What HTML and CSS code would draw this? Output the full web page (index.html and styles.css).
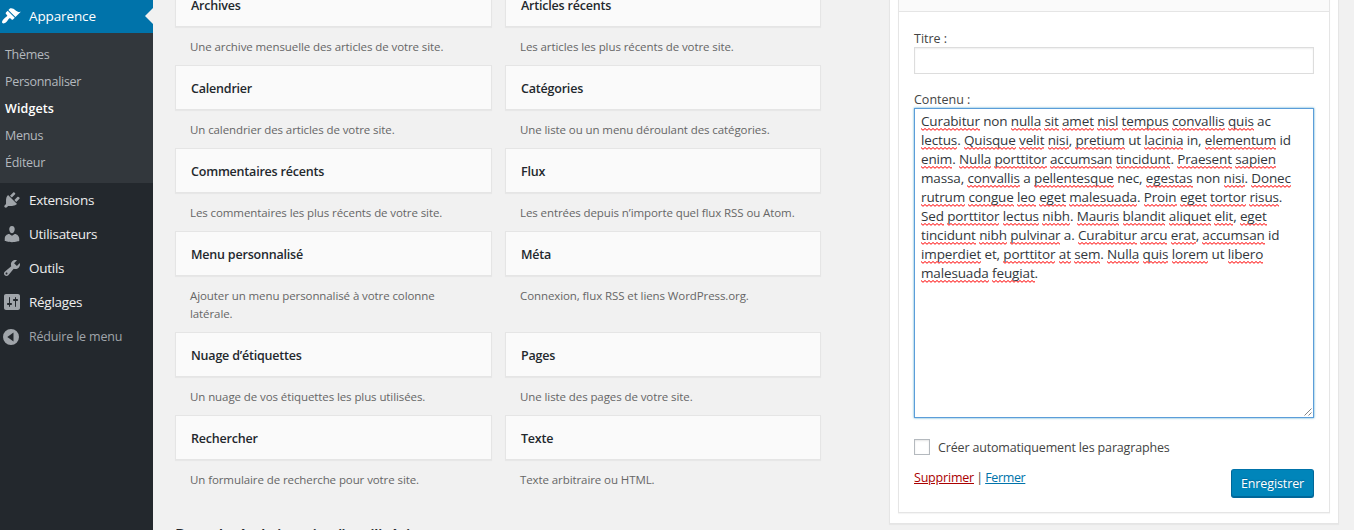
FILE: index.html
```html
<!DOCTYPE html>
<html lang="fr">
<head>
<meta charset="utf-8">
<title>Widgets</title>
<link rel="stylesheet" href="styles.css">
</head>
<body>
<div class="admin">
  <nav class="menu">
    <a class="item current"><svg class="icon" viewBox="0 0 20 20"><path d="M14.48 11.06L7.41 3.99l1.5-1.5c.5-.56 2.300-.47 3.510.32 1.210.8 1.430 1.280 2.910 2.100 1.180.64 2.450 1.260 4.450.85zm-.71.71L6.700 4.700 4.930 6.470c-.39.39-.39 1.020 0 1.410l1.060 1.060c.39.39.39 1.030 0 1.420-.6.6-1.430 1.110-2.210 1.690-.35.26-.7.53-1.010.84C1.430 14.230.4 16.080 1.400 17.070c.99 1 2.840-.03 4.180-1.360.31-.31.58-.66.85-1.020.57-.78 1.080-1.610 1.690-2.210.39-.39 1.020-.39 1.410 0l1.060 1.060c.39.39 1.020.39 1.410 0z"/></svg><span>Apparence</span></a>
    <div class="submenu">
      <a>Thèmes</a><a>Personnaliser</a><a class="on">Widgets</a><a>Menus</a><a>Éditeur</a>
    </div>
    <a class="item"><svg class="icon" viewBox="0 0 20 20"><path d="M13.110 4.360L9.870 7.600 8 5.730l3.240-3.240c.35-.34 1.050-.2 1.560.32.52.51.66 1.210.31 1.550zm-8 1.770l.91-1.120 9.010 9.010-1.190.84c-.71.71-2.630 1.160-3.820 1.160H6.140L4.900 17.260c-.59.59-1.540.59-2.120 0-.59-.58-.59-1.530 0-2.120l1.240-1.240v-3.880c0-1.130.4-3.190 1.090-3.890zm7.260 3.970l3.240-3.240c.34-.35 1.040-.21 1.550.31.52.51.66 1.210.31 1.550l-3.240 3.250z"/></svg><span>Extensions</span></a>
    <a class="item"><svg class="icon" viewBox="0 0 20 20"><path d="M10 9.250c-2.270 0-2.730-3.440-2.730-3.440C7 4.020 7.820 2 9.970 2c2.160 0 2.980 2.020 2.710 3.810 0 0-.41 3.440-2.680 3.440zm0 2.570L12.720 10c2.390 0 4.520 2.330 4.520 4.530v2.490s-3.650 1.130-7.240 1.130c-3.650 0-7.240-1.130-7.240-1.130v-2.490c0-2.250 1.940-4.480 4.470-4.480z"/></svg><span>Utilisateurs</span></a>
    <a class="item"><svg class="icon" viewBox="0 0 20 20"><path d="M16.680 9.770c-1.340 1.340-3.300 1.670-4.950.99l-5.410 6.520c-.99.99-2.590.99-3.580 0s-.99-2.590 0-3.570l6.520-5.420c-.68-1.650-.35-3.610.99-4.950 1.280-1.280 3.120-1.620 4.720-1.060l-2.890 2.890 2.820 2.820 2.860-2.870c.53 1.580.18 3.390-1.080 4.650zM3.810 16.210c.4.390 1.040.39 1.430 0 .4-.4.4-1.040 0-1.430-.39-.4-1.030-.4-1.430 0-.39.39-.39 1.030 0 1.430z"/></svg><span>Outils</span></a>
    <a class="item"><svg class="icon" viewBox="0 0 20 20"><path d="M18 16V4c0-1.100-.9-2-2-2H4c-1.100 0-2 .9-2 2v12c0 1.100.9 2 2 2h12c1.100 0 2-.9 2-2zM8 11h1c.55 0 1 .45 1 1s-.45 1-1 1H8v1.500c0 .28-.22.5-.5.5s-.5-.22-.5-.5V13H6c-.55 0-1-.45-1-1s.45-1 1-1h1V5.500c0-.28.22-.5.5-.5s.5.22.5.5V11zm5-2h-1c-.55 0-1-.45-1-1s.45-1 1-1h1V5.500c0-.28.22-.5.5-.5s.5.22.5.5V7h1c.55 0 1 .45 1 1s-.45 1-1 1h-1v5.500c0 .28-.22.5-.5.5s-.5-.22-.5-.5V9z"/></svg><span>Réglages</span></a>
    <a class="item collapse"><svg class="icon" viewBox="0 0 20 20"><path fill-rule="evenodd" d="M10 2a8 8 0 1 0 0 16 8 8 0 0 0 0-16zM12.500 5.600v8.800L6.300 10z"/></svg><span>Réduire le menu</span></a>
  </nav>

  <main class="available">
    <div class="grid">
      <div class="widget"><h3>Archives</h3><p>Une archive mensuelle des articles de votre site.</p></div>
      <div class="widget"><h3>Articles récents</h3><p>Les articles les plus récents de votre site.</p></div>
      <div class="widget"><h3>Calendrier</h3><p>Un calendrier des articles de votre site.</p></div>
      <div class="widget"><h3>Catégories</h3><p>Une liste ou un menu déroulant des catégories.</p></div>
      <div class="widget"><h3>Commentaires récents</h3><p>Les commentaires les plus récents de votre site.</p></div>
      <div class="widget"><h3>Flux</h3><p>Les entrées depuis n’importe quel flux RSS ou Atom.</p></div>
      <div class="widget"><h3>Menu personnalisé</h3><p>Ajouter un menu personnalisé à votre colonne<br>latérale.</p></div>
      <div class="widget"><h3>Méta</h3><p>Connexion, flux RSS et liens WordPress.org.</p></div>
      <div class="widget"><h3>Nuage d’étiquettes</h3><p>Un nuage de vos étiquettes les plus utilisées.</p></div>
      <div class="widget"><h3>Pages</h3><p>Une liste des pages de votre site.</p></div>
      <div class="widget"><h3>Rechercher</h3><p>Un formulaire de recherche pour votre site.</p></div>
      <div class="widget"><h3>Texte</h3><p>Texte arbitraire ou HTML.</p></div>
    </div>
    <h2 class="inactive">Barre latérale inactive (inutilisée)</h2>
  </main>

  <aside class="sidebar">
    <div class="editor">
      <div class="editor-top"></div>
      <div class="form">
        <label class="label">Titre :</label>
        <div class="input"></div>
        <label class="label second">Contenu :</label>
        <div class="textarea">
          <div><u>Curabitur</u> non <u>nulla</u> <u>sit</u> <u>amet</u> <u>nisl</u> <u>tempus</u> <u>convallis</u> <u>quis</u> ac</div>
          <div><u>lectus</u>. <u>Quisque</u> <u>velit</u> <u>nisi</u>, <u>pretium</u> ut <u>lacinia</u> in, <u>elementum</u> id</div>
          <div><u>enim</u>. <u>Nulla</u> <u>porttitor</u> <u>accumsan</u> <u>tincidunt</u>. <u>Praesent</u> <u>sapien</u></div>
          <div>massa, <u>convallis</u> a <u>pellentesque</u> nec, <u>egestas</u> non <u>nisi</u>. <u>Donec</u></div>
          <div><u>rutrum</u> <u>congue</u> <u>leo</u> <u>eget</u> <u>malesuada</u>. <u>Proin</u> <u>eget</u> <u>tortor</u> <u>risus</u>.</div>
          <div><u>Sed</u> <u>porttitor</u> <u>lectus</u> <u>nibh</u>. <u>Mauris</u> <u>blandit</u> <u>aliquet</u> <u>elit</u>, <u>eget</u></div>
          <div><u>tincidunt</u> <u>nibh</u> <u>pulvinar</u> a. <u>Curabitur</u> <u>arcu</u> <u>erat</u>, <u>accumsan</u> id</div>
          <div><u>imperdiet</u> et, <u>porttitor</u> <u>at</u> <u>sem</u>. <u>Nulla</u> <u>quis</u> <u>lorem</u> ut <u>libero</u></div>
          <div><u>malesuada</u> <u>feugiat</u>.</div>
          <svg class="grip" viewBox="0 0 8 8"><path d="M0.500 7.500L7.500 0.500M4.500 7.500L7.500 4.500"/></svg>
        </div>
        <div class="check"><span class="box"></span><span class="check-text">Créer automatiquement les paragraphes</span></div>
        <div class="actions"><div class="links"><a class="delete">Supprimer</a> | <a class="close">Fermer</a></div><button class="save">Enregistrer</button></div>
      </div>
    </div>
  </aside>
</div>
</body>
</html>
```

FILE: styles.css
```css
* { box-sizing: border-box; }
body {
  margin: 0;
  background: #f1f1f1;
  color: #444;
  font: 12.5px/18px "Open Sans", "Noto Sans", sans-serif;
}
h2, h3, p { margin: 0; }
.admin { display: flex; height: 530px; overflow: hidden; }

.menu { width: 153px; flex: none; background: #23282d; }
.item {
  position: relative;
  display: flex;
  align-items: center;
  height: 34px;
  padding-left: 1.5px;
  gap: 7.5px;
  color: #eee;
  font-size: 13.5px;
  letter-spacing: -.28px;
}
.icon { width: 20px; height: 20px; fill: #a0a5aa; }
.item.current { height: 33px; padding-left: 1px; padding-bottom: 1px; gap: 8px; background: #0073aa; color: #fff; letter-spacing: -.12px; }
.current .icon { fill: #fff; }
.current::after {
  content: "";
  position: absolute;
  right: 0;
  top: 8px;
  border: 8px solid transparent;
  border-left: 0;
  border-right-color: #f1f1f1;
}
.collapse { padding-left: 1px; gap: 8px; padding-top: 1px; color: #a0a5aa; font-size: 12.5px; letter-spacing: -.18px; }
.submenu { height: 150px; padding: 8px 5px; background: #32373c; }
.submenu a { display: block; line-height: 27px; color: #b4b9be; letter-spacing: -.28px; }
.submenu .on { color: #fff; font-weight: 600; letter-spacing: .1px; }

.available { width: 646px; margin: -18px 0 0 22px; flex: none; }
.grid { display: grid; grid-template-columns: 317px 316px; column-gap: 13px; }
.widget h3 {
  height: 45px;
  padding: 0 15px;
  border: 1px solid #e5e5e5;
  box-shadow: 0 1px 1px rgba(0, 0, 0, .04);
  background: #fafafa;
  color: #23282d;
  font-size: 12.5px;
  font-weight: 600;
  line-height: 46px;
  letter-spacing: -.2px;
}
.widget p { padding: 11px 15px 9px; color: #666; font-size: 11.5px; letter-spacing: -.09px; }
.inactive { margin-top: 25px; color: #23282d; font-size: 16px; font-weight: 600; line-height: 24px; letter-spacing: -.55px; white-space: nowrap; }

.sidebar {
  width: 450px;
  height: 542px;
  margin: -18px 0 0 68px;
  padding: 8px;
  flex: none;
  border: 1px solid #e5e5e5;
  box-shadow: 0 1px 1px rgba(0, 0, 0, .04);
  background: #fff;
}
.editor { width: 432px; height: 522px; border: 1px solid #e5e5e5; box-shadow: 0 1px 1px rgba(0, 0, 0, .04); }
.editor-top { height: 20px; background: #fafafa; border-bottom: 1px solid #e5e5e5; }
.form { padding: 17px 15px; }
.label { display: block; height: 18px; line-height: 20px; }
.input { height: 27px; border: 1px solid #ddd; box-shadow: inset 0 1px 2px rgba(0, 0, 0, .07); }
.second { margin: 16px 0 0; }
.textarea {
  position: relative;
  height: 310px;
  padding: 3px 6px;
  border: 1px solid #5b9dd9;
  box-shadow: 0 0 2px rgba(30, 140, 190, .8);
  color: #32373c;
  font-size: 13.5px;
  line-height: 19px;
  letter-spacing: -.14px;
  white-space: nowrap;
}
.textarea u {
  padding-bottom: 1px;
  text-decoration: none;
  background: url("data:image/svg+xml,%3Csvg xmlns='http://www.w3.org/2000/svg' width='4' height='3'%3E%3Cpath d='M0 .5L2 2.300L4 .5' fill='none' stroke='red'/%3E%3C/svg%3E") repeat-x left bottom 0;
}
.grip { position: absolute; right: 1px; bottom: 1px; width: 8px; height: 8px; fill: none; stroke: #666; stroke-width: .8; }
.check { display: flex; align-items: center; gap: 8px; height: 18px; margin-top: 20px; }
.check-text { padding-top: 2px; letter-spacing: -.16px; }
.box { width: 16px; height: 16px; border: 1px solid #b4b9be; box-shadow: inset 0 1px 2px rgba(0, 0, 0, .1); }
.actions { display: flex; justify-content: space-between; margin-top: 13px; }
.links { letter-spacing: -.2px; word-spacing: -.8px; }
.links a { text-decoration: underline; }
.delete { color: #a00; }
.close { color: #0073aa; letter-spacing: -.35px; }
.save {
  width: 83px;
  height: 29px;
  padding: 0;
  border: 1px solid #006799;
  border-top-color: #0073aa;
  border-radius: 3px;
  box-shadow: inset 0 -1px 0 #006799;
  background: #0085ba;
  color: #fff;
  font: 12.5px "Open Sans", sans-serif;
  letter-spacing: -.1px;
  text-shadow: 0 -1px 1px #006799;
}
```
